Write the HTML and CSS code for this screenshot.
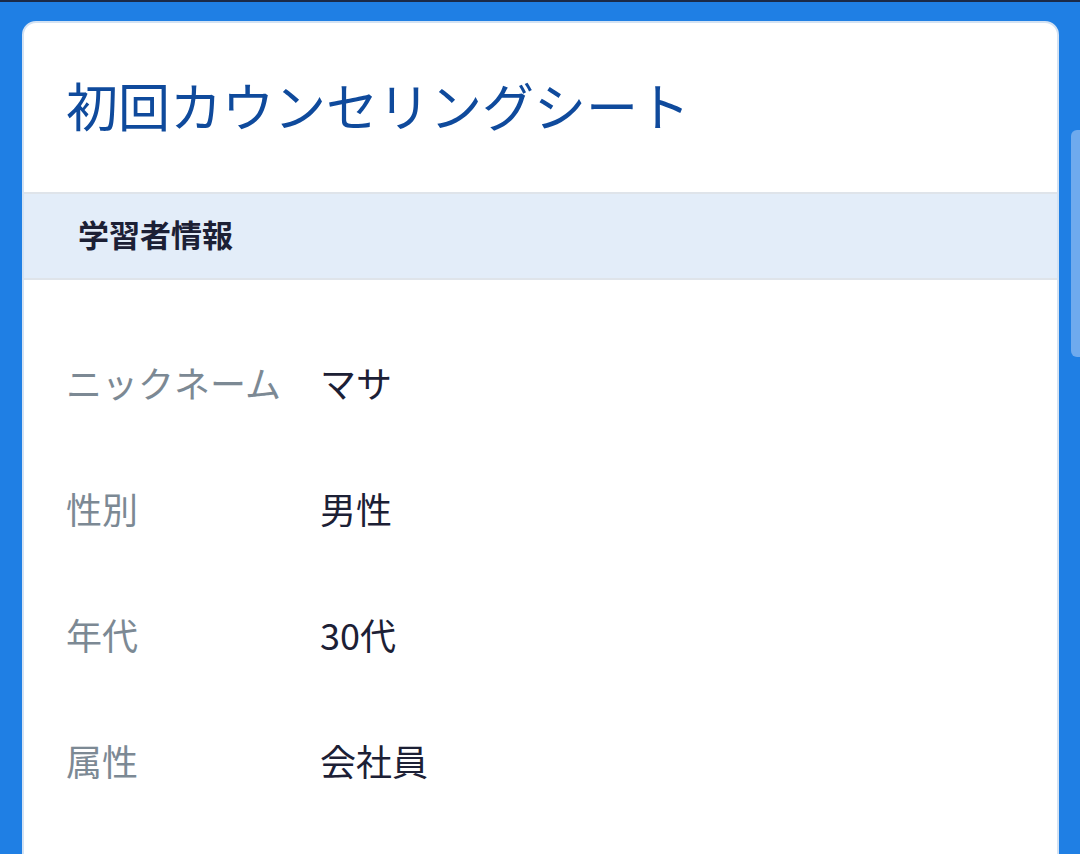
FILE: index.html
```html
<!DOCTYPE html>
<html lang="ja">
<head>
<meta charset="utf-8">
<title>初回カウンセリングシート</title>
<link rel="stylesheet" href="styles.css">
</head>
<body>
<div class="topline"></div>
<main class="card">
  <header class="card-head">
    <h1 class="title">初回カウンセリングシート</h1>
  </header>
  <section class="section">
    <h2 class="section-title">学習者情報</h2>
  </section>
  <dl class="rows">
    <div class="row"><dt class="label">ニックネーム</dt><dd class="value">マサ</dd></div>
    <div class="row"><dt class="label">性別</dt><dd class="value">男性</dd></div>
    <div class="row"><dt class="label">年代</dt><dd class="value">30代</dd></div>
    <div class="row"><dt class="label">属性</dt><dd class="value">会社員</dd></div>
  </dl>
</main>
<div class="scrollbar"></div>
</body>
</html>
```

FILE: styles.css
```css
html, body {
  margin: 0;
  padding: 0;
  height: 100%;
  overflow: hidden;
}
body {
  background: #1f7fe4;
  font-family: "Noto Sans CJK JP", "Noto Sans", sans-serif;
}
.topline {
  height: 2px;
  background: #1b2a47;
}
.card {
  margin: 19px 21px 0 22px;
  background: #ffffff;
  border: 2px solid #d3e2f3;
  border-radius: 14px;
  overflow: hidden;
  height: 900px;
}
.card-head {
  padding: 43px 42px 48px;
}
.title {
  margin: 0;
  font-size: 52px;
  line-height: 78px;
  font-weight: 400;
  color: #0f4a9c;
}
.section {
  background: #e3edf9;
  border-top: 2px solid #dfe4ea;
  border-bottom: 2px solid #dfe4ea;
  padding: 0 54px 5px;
  height: 79px;
  display: flex;
  align-items: center;
}
.section-title {
  margin: 0;
  font-size: 31px;
  font-weight: 700;
  color: #1c2035;
}
.rows {
  margin: 0;
  padding: 39px 42px 0;
}
.row {
  display: flex;
  align-items: center;
  height: 126px;
}
.label {
  width: 254px;
  flex: none;
  font-size: 36px;
  color: #7c8994;
}
.value {
  margin: 0;
  font-size: 36px;
  color: #1c2035;
}
.scrollbar {
  position: fixed;
  right: 0;
  top: 130px;
  width: 9px;
  height: 227px;
  border-radius: 6px 0 0 6px;
  background: #6eaaee;
}
```
